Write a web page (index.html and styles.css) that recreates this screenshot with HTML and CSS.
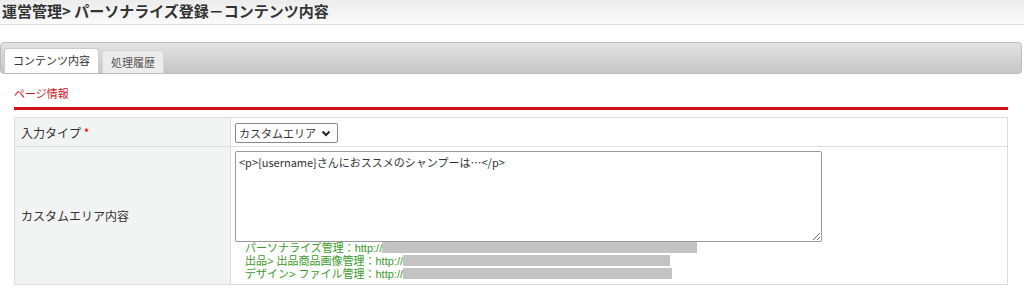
FILE: index.html
```html
<!DOCTYPE html>
<html lang="ja">
<head>
    <meta charset="UTF-8">
    <title>パーソナライズ登録</title>
    <link rel="stylesheet" href="styles.css">
</head>
<body>
    <div class="page-title">運営管理&gt; パーソナライズ登録－コンテンツ内容</div>

    <div class="tabs">
        <div class="tab active">コンテンツ内容</div>
        <div class="tab">処理履歴</div>
    </div>

    <div class="content">
        <div class="section-title">ページ情報</div>

        <table class="form-table">
            <tr class="row-type">
                <th>入力タイプ <span class="required">*</span></th>
                <td>
                    <span class="select-wrap">
                        <select class="type-select">
                            <option>カスタムエリア</option>
                        </select>
                        <svg class="chevron" width="10" height="7" viewBox="0 0 10 7">
                            <path d="M1.5 1.5 L5 5 L8.5 1.5" fill="none" stroke="#222" stroke-width="2"/>
                        </svg>
                    </span>
                </td>
            </tr>
            <tr>
                <th>カスタムエリア内容</th>
                <td>
                    <textarea class="area-input">&lt;p&gt;{username}さんにおススメのシャンプーは…&lt;/p&gt;</textarea>
                    <ul class="hints">
                        <li>パーソナライズ管理：http://<span class="masked" style="width: 315px"></span></li>
                        <li>出品&gt; 出品商品画像管理：http://<span class="masked" style="width: 267px"></span></li>
                        <li>デザイン&gt; ファイル管理：http://<span class="masked" style="width: 269px"></span></li>
                    </ul>
                </td>
            </tr>
        </table>
    </div>
</body>
</html>
```

FILE: styles.css
```css
body {
    margin: 0;
    font-family: "Noto Sans CJK JP", "Noto Sans", sans-serif;
    font-size: 12px;
    color: #333;
    background: #fff;
}

.page-title {
    height: 24px;
    line-height: 22px;
    padding-left: 2px;
    font-size: 15px;
    font-weight: bold;
    color: #333;
    background: linear-gradient(#ececec, #fafafa);
    border-bottom: 1px solid #ddd;
}

.tabs {
    display: flex;
    align-items: flex-end;
    gap: 3px;
    height: 23px;
    margin: 17px 2px 0 0;
    padding: 7px 0 0 3px;
    border: 1px solid #bbb;
    border-radius: 4px;
    background: linear-gradient(#e2e2e2, #c6c6c6);
}

.tab {
    height: 22px;
    line-height: 22px;
    padding: 0 8px;
    font-size: 11px;
    color: #555;
    background: #ececec;
    border: 1px solid #d6d6d6;
    border-bottom: none;
    border-radius: 3px 3px 0 0;
}

.tab.active {
    height: 24px;
    line-height: 23px;
    padding: 0 8px;
    color: #333;
    background: #fff;
    border-color: #ccc;
}

.content {
    padding: 0 16px 0 14px;
}

.section-title {
    padding: 11px 0 6px;
    line-height: 16px;
    font-size: 11px;
    color: #d0101a;
    border-bottom: 3px solid #d40e16;
}

.form-table {
    width: 100%;
    margin-top: 7px;
    border-collapse: collapse;
}

.form-table th,
.form-table td {
    border: 1px solid #dcdcdc;
    text-align: left;
    font-weight: normal;
}

.form-table th {
    width: 209px;
    padding: 0 0 0 6px;
    background: #f2f3f3;
}

.form-table td {
    padding: 4px 5px 3px 4px;
}

.row-type th,
.row-type td {
    height: 21px;
}

.required {
    color: #e00;
}

.select-wrap {
    position: relative;
    display: inline-block;
}

.type-select {
    display: block;
    height: 20px;
    width: 103px;
    padding: 0 18px 0 3px;
    font-family: inherit;
    font-size: 11px;
    color: #333;
    border: 1px solid #888;
    border-radius: 2px;
    background: #fff;
    appearance: none;
}

.chevron {
    position: absolute;
    right: 7px;
    top: 7px;
    pointer-events: none;
}

.area-input {
    display: block;
    box-sizing: border-box;
    width: 587px;
    height: 91px;
    margin: 0;
    padding: 2px 3px;
    font-family: inherit;
    font-size: 11px;
    color: #333;
    border: 1px solid #999;
    border-radius: 2px;
}

.hints {
    list-style: none;
    margin: 0;
    padding: 0 0 0 10px;
    font-family: "Liberation Sans", "Noto Sans CJK JP", sans-serif;
    font-size: 11px;
    line-height: 13px;
    color: #3a9a2a;
}

.masked {
    display: inline-block;
    height: 11px;
    vertical-align: -1px;
    background: #c3c3c3;
}
```
